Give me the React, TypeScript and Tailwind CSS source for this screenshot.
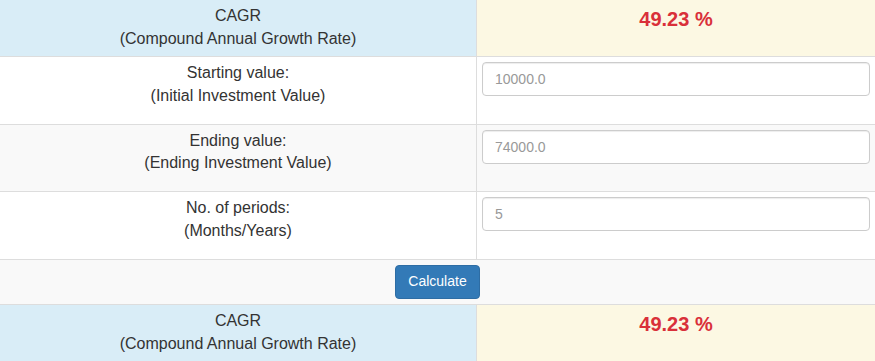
export default function App() {
  const inputs = [
    { label: "Starting value:", sub: "(Initial Investment Value)", value: "10000.0", striped: false },
    { label: "Ending value:", sub: "(Ending Investment Value)", value: "74000.0", striped: true },
    { label: "No. of periods:", sub: "(Months/Years)", value: "5", striped: false },
  ]

  const result = (
    <div className="flex border-b border-[#ddd]">
      <div className="w-[477px] shrink-0 border-r border-[#ddd] bg-[#d9edf7] p-[5px] text-center">
        CAGR
        <br />
        (Compound Annual Growth Rate)
      </div>
      <div className="flex-1 bg-[#fcf8e3] p-[5px] text-center text-[20px] font-bold text-[#d9303a]">
        49.23 %
      </div>
    </div>
  )

  return (
    <div className="w-full bg-white text-[16px] leading-[1.42857] text-[#333] font-['Liberation_Sans',Arial,sans-serif]">
      {result}

      {inputs.map((row) => (
        <div
          key={row.label}
          className={row.striped ? "flex border-b border-[#ddd] bg-[#f9f9f9]" : "flex border-b border-[#ddd] bg-white"}
        >
          <div className="w-[477px] shrink-0 border-r border-[#ddd] p-[5px] text-center">
            {row.label}
            <br />
            {row.sub}
          </div>
          <div className="flex-1 p-[5px]">
            <input
              type="text"
              placeholder={row.value}
              className="block h-[34px] w-full rounded border border-[#ccc] bg-white px-3 text-[14px] text-[#555] shadow-[inset_0_1px_1px_rgba(0,0,0,0.075)] outline-none placeholder:text-[#999]"
            />
            <div className="h-[22.86px]" />
          </div>
        </div>
      ))}

      {/* calculate row spans both columns */}
      <div className="flex justify-center border-b border-[#ddd] bg-[#f9f9f9] p-[5px]">
        <button className="h-[34px] rounded border border-[#2e6da4] bg-[#337ab7] px-3 text-[14px] text-white">
          Calculate
        </button>
      </div>

      {result}
    </div>
  )
}
